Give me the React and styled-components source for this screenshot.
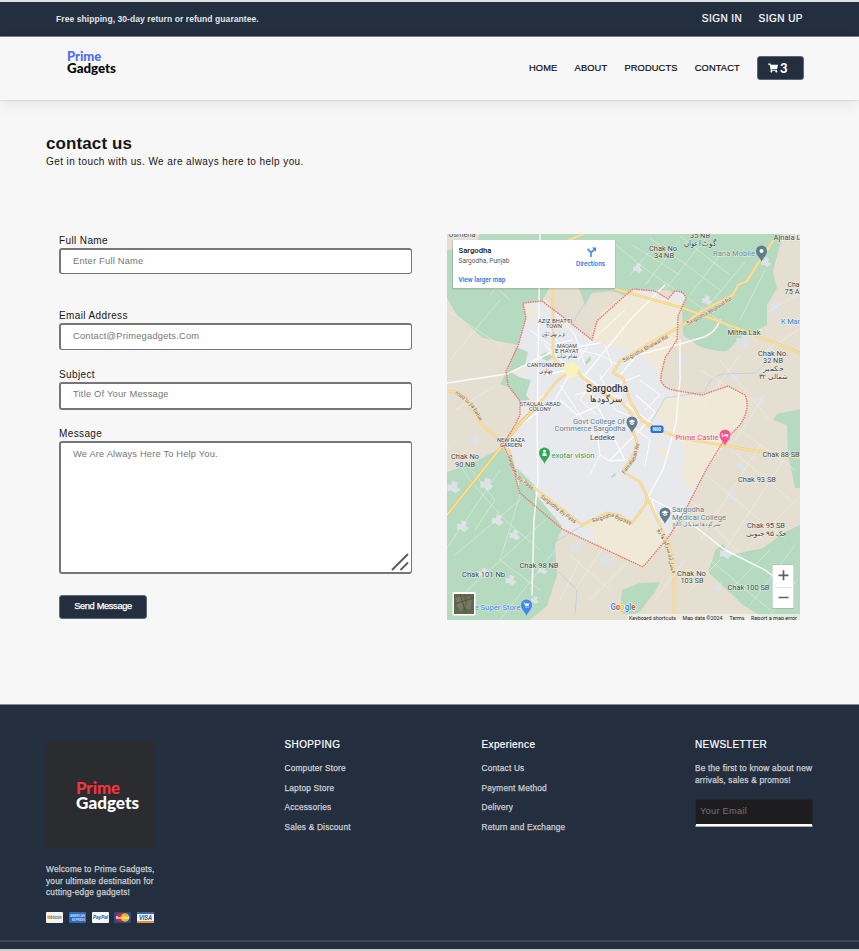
import React from "react";
import styled, { createGlobalStyle, css } from "styled-components";
import { FaShoppingCart } from "react-icons/fa";

const NAVY = "#232f3f";

const GlobalStyle = createGlobalStyle`
  *, *::before, *::after { box-sizing: border-box; }
  body {
    margin: 0;
    background: #f7f7f7;
    color: #161616;
    font-family: "Liberation Sans", Arial, sans-serif;
    letter-spacing: 0.38px;
  }
  h1, h2, p, ul { margin: 0; padding: 0; }
  a { color: inherit; text-decoration: none; }
`;

const Page = styled.div`
  width: 100%;
  height: 951px;
  display: flex;
  flex-direction: column;
  overflow: hidden;
  border-top: 2px solid #dfe2e3;
  border-bottom: 2px solid #c9cbcb;
`;

/* ---------- header ---------- */

const TopBar = styled.div`
  height: 35px;
  flex: none;
  display: flex;
  align-items: center;
  justify-content: space-between;
  padding: 0 56px;
  background: ${NAVY};
  border-bottom: 1px solid #75808d;
  color: #f5f5f5;
`;

const Promo = styled.p`
  font-size: 8.5px;
  font-weight: bold;
  line-height: 10px;
  letter-spacing: 0.07px;
  color: #e2e5e8;
`;

const AuthLinks = styled.nav`
  display: flex;
  gap: 16.3px;
  font-size: 10px;
  line-height: 12px;
  letter-spacing: 0.47px;
  margin-top: -1px;
  color: #fff;
  -webkit-text-stroke: 0.2px #fff;
`;

const Header = styled.header`
  height: 63px;
  flex: none;
  display: flex;
  justify-content: space-between;
  padding: 0 55px 0 67px;
  background: #f7f7f7;
  box-shadow: 0 1px 1px rgba(0, 0, 0, 0.07), 0 4px 14px rgba(0, 0, 0, 0.07);
`;

const LogoSlot = styled.a`
  padding-top: 14px;
`;

const Wordmark = styled.svg`
  display: block;
  flex: none;
  overflow: visible;
  font-family: Lato, sans-serif;
  font-weight: 900;
  letter-spacing: 0;
`;

const Menu = styled.nav`
  display: flex;
  align-items: center;
  height: 62px;
  font-size: 9.3px;
  line-height: 11px;
  letter-spacing: 0.12px;
  color: #0c0c0c;
  -webkit-text-stroke: 0.2px #0c0c0c;
`;

const MenuLink = styled.a`
  margin-right: 17.2px;
`;

const CartButton = styled.a`
  width: 47px;
  height: 24px;
  display: flex;
  align-items: center;
  padding: 0 0 1px 10px;
  gap: 2px;
  border: 1px solid #5d6875;
  border-radius: 3px;
  background: ${NAVY};
  color: #fff;
  font: 900 13px/14px Lato, "Liberation Sans", sans-serif;
  -webkit-text-stroke: 0;
`;

/* ---------- contact section ---------- */

const Main = styled.main`
  height: 604px;
  flex: none;
  padding: 34px 46px 0;
`;

const Title = styled.h1`
  font-size: 17px;
  line-height: 20px;
  letter-spacing: 0.1px;
`;

const Lead = styled.p`
  font-size: 10px;
  line-height: 12px;
  letter-spacing: 0.41px;
  margin-top: 2px;
`;

const Columns = styled.div`
  display: grid;
  grid-template-columns: 353px 353px;
  column-gap: 35px;
  margin: 66px 0 0 13px;
`;

const Form = styled.form`
  display: flex;
  flex-direction: column;
  padding-top: 1px;
`;

const Field = styled.label`
  display: flex;
  flex-direction: column;
  margin-bottom: ${(p) => p.$after}px;
  font-size: 10px;
  line-height: 12px;
`;

const control = css`
  width: 100%;
  margin: 1px 0 0;
  padding: 0 12px;
  border: solid #767676;
  border-width: 2px 1px 1px 2px;
  border-radius: 3px;
  background: #fff;
  outline: none;
  font: 9.3px/11px "Liberation Sans", Arial, sans-serif;
  letter-spacing: 0.22px;
  &::placeholder { color: #757575; opacity: 1; }
`;

const TextInput = styled.input`
  ${control}
  height: ${(p) => p.$height}px;
  padding-bottom: ${(p) => p.$lift || 2}px;
  border-bottom-width: ${(p) => p.$bottom || 1}px;
`;

const AreaWrap = styled.div`
  position: relative;
  display: flex;
`;

const TextArea = styled.textarea`
  ${control}
  height: 133px;
  padding-top: 6px;
  border-bottom-width: 2px;
  letter-spacing: 0.18px;
  resize: none;
`;

const Grip = styled.svg`
  position: absolute;
  right: 3px;
  bottom: 3px;
`;

const SendButton = styled.button`
  width: 88px;
  height: 24px;
  padding: 0 0 1px;
  border: 1px solid #5d6875;
  border-radius: 3px;
  background: ${NAVY};
  color: #fff;
  font: 9.3px/11px "Liberation Sans", Arial, sans-serif;
  letter-spacing: -0.36px;
  -webkit-text-stroke: 0.25px #fff;
`;

const MapView = styled.svg`
  display: block;
  width: 353px;
  height: 386px;
  font-family: Roboto, "Noto Sans", sans-serif;
  letter-spacing: 0;
`;

/* ---------- footer ---------- */

const Footer = styled.footer`
  flex: 1;
  display: flex;
  flex-direction: column;
  justify-content: space-between;
  background: ${NAVY};
  border-top: 1px solid #858e98;
  color: #ccced1;
`;

const FooterGrid = styled.div`
  display: grid;
  grid-template-columns: 238.5px 197px 213.5px 118px;
  padding: 34px 46px 0;
`;

const BrandTile = styled.div`
  width: 108.5px;
  height: 108px;
  margin-top: 1px;
  padding: 41px 0 0 30px;
  background: #2b2c30;
`;

const Small = styled.p`
  font-size: 8.3px;
  line-height: 11.5px;
  letter-spacing: 0.2px;
  white-space: nowrap;
  -webkit-text-stroke: 0.25px currentColor;
`;

const Blurb = styled(Small)`
  margin-top: 16px;
`;

const FooterHeading = styled.h2`
  font-size: 10px;
  font-weight: normal;
  line-height: 12px;
  margin-bottom: 12px;
  color: #fff;
  -webkit-text-stroke: 0.2px #fff;
`;

const LinkList = styled.ul`
  list-style: none;
  font-size: 8.3px;
  line-height: 19.6px;
  letter-spacing: 0.19px;
  margin-top: -4px;
  -webkit-text-stroke: 0.25px currentColor;
`;

const Payments = styled.div`
  display: flex;
  gap: 5.8px;
  margin-top: 13px;
`;

const Card = styled.svg`
  display: block;
  width: 17px;
  height: 11px;
  font-family: "Liberation Sans", sans-serif;
  font-weight: bold;
  letter-spacing: 0;
`;

const EmailInput = styled.input`
  display: block;
  width: 118px;
  height: 28px;
  margin-top: 13px;
  padding: 0 4px 3px;
  border: 1px solid #27272b;
  border-bottom: 3px ridge #fff;
  border-radius: 1px;
  background: #1d1d20;
  outline: none;
  font: 9.3px/11px "Liberation Sans", Arial, sans-serif;
  letter-spacing: 0.25px;
  &::placeholder { color: #757575; opacity: 1; }
`;

const FooterRule = styled.div`
  height: 9px;
  border-top: 2px solid #3f4751;
`;

/* ---------- map data (page-scaled map units) ---------- */

const greens = [
  "M447 250L475 246L480 234L783 234L773 271L777 288L767 305L767 325L737 341L727 351Q711 352 697 345L683 335L682 305L670 290L630 291L592 325L567 255L542 301L523 303L526 318L518 345L483 338L457 315L447 298Z",
  "M447 472L473 463L503 447L512 465L520 493L562 529L555 545L557 575L547 606L530 620L447 620Z",
  "M708 572L713 558L715 550L723 544L730 555L763 548L785 532L800 525L800 620L767 620L743 605Z",
  "M787 425L773 420L777 414L800 409L800 488L795 488L788 455Z",
  "M620 612L622 590L640 583L660 582L655 592L647 602L640 612L630 616Z",
  "M516 347L528 352L525 365L510 372L522 378L531 380L526 395L530 400L520 401L508 387L500 384L507 371Z",
  "M541 355L546 352L553 357L548 361L541 358Z",
  "M585 362L590 356L591 360L586 365Z",
  "M611 477L615 473L616 475L612 478Z",
  "M517 468L534 485L536 495L562 526L560 530L520 493Z",
];

const creams = [
  "M600 313L630 291L683 303L678 316L677 340L665 358L661 375L650 362L630 350L600 343Z",
  "M680 391L702 395L728 386L745 395L748 410L737 428L707 468L690 490L681 478L686 455L680 440L660 422L655 410L668 395Z",
  "M632 524L645 508L652 520L662 545L652 557L643 567L600 547L592 530L582 527L607 517Z",
  "M515 360L523 357L524 370L518 375L511 371Z",
  "M525 306L533 305L540 312L532 322L526 316Z",
  "M657 448L664 448L672 458L662 458Z",
];

const lots = [
  [454, 487, 13], [487, 484, 13], [498, 520, 12], [463, 526, 12], [515, 535, 11], [511, 580, 11], [475, 440, 10],
  [577, 547, 13], [606, 560, 13], [638, 268, 10], [707, 300, 10], [766, 262, 10], [682, 358, 10], [735, 375, 9],
  [744, 341, 15], [741, 466, 10], [732, 497, 10], [726, 553, 12], [760, 400, 10], [552, 257, 8], [485, 278, 9], [770, 355, 9], [718, 587, 10],
  [776, 307, 12], [484, 573, 11], [535, 600, 8], [543, 570, 9],
];

const whiteRoads = [
  "M540 234L537 430L538 480L534 520L532 595",
  "M447 383L507 374L556 350L600 343",
  "M573 368L620 400L653 424",
  "M585 375L630 320L665 285",
  "M583 378L625 460L610 461L600 455L598 440L608 420",
  "M620 375L637 355L680 344L704 337Q716 332 720 320",
  "M680 340L680 380L676 423L663 470L648 497",
  "M648 497L678 513L725 550L765 570L785 585",
  "M573 368L555 400L520 425",
  "M610 460L640 430L655 412L636 395",
  "M547 375L570 369L545 345",
  "M560 400L577 415L600 405",
];

const cityLanes = [
  "M557 345L600 355L618 365", "M560 385L590 430L600 440", "M578 360L592 340L625 310", "M590 385L580 400L597 415",
  "M545 300L575 335L585 365", "M530 330L550 345L572 340", "M575 395L615 385L640 375", "M600 375L615 410L640 420",
  "M590 400L620 395L628 412", "M640 380L660 395L645 410", "M630 425L650 440L645 465", "M565 372L548 392L530 405",
  "M600 455L590 475", "M652 500L660 530", "M550 330L560 345", "M605 345L612 365L600 380",
];

const lanes = [
  "M447 445L470 480L505 520L540 550",
  "M447 548L500 470", "M455 555L520 500", "M462 595L545 520", "M500 620L555 550", "M470 468L495 500L475 530", "M520 495L500 560L540 590",
  "M610 240L640 265L690 300L740 335", "M632 245L680 275", "M650 238L720 290", "M680 236L730 275", "M630 275L655 245", "M645 285L680 240",
  "M665 290L700 245", "M690 295L720 255", "M705 310L745 262", "M740 320L765 270",
  "M460 255L510 300", "M490 295L520 260", "M447 310L500 345", "M450 360L500 300", "M455 410L497 385",
  "M700 470L760 520", "M690 500L745 560", "M720 440L790 500", "M740 430L795 470", "M700 540L760 445", "M725 550L790 450", "M745 550L797 500",
  "M710 560L770 610", "M730 590L770 550", "M750 605L795 545", "M770 615L797 580",
  "M570 555L610 590", "M575 590L605 545", "M590 600L630 560", "M560 600L580 560", "M685 560L655 600", "M690 590L720 560",
  "M700 370L750 400", "M720 360L770 420", "M740 355L700 410", "M765 395L735 440", "M752 360L798 330", "M770 310L798 295",
];

const yellowRoads = [
  "M553 288L553 355L557 366L573 365L583 378",
  "M517 425L538 405L557 381L573 368",
  "M567 241L583 234",
  "M615 289L683 308L750 333L800 353",
  "M583 378L605 395L622 402L632 415",
  "M620 361L647 345L683 325L700 312L733 295L738 285L747 281L757 265L773 241",
  "M447 391L455 392L465 397L482 425L500 440L510 452L515 475L540 492L582 525L607 513L618 515L632 523L645 505L647 497",
  "M647 425L680 438L727 446L800 458",
  "M630 355L620 361L613 373L623 378L630 401L642 421L652 425",
  "M647 497L640 482L623 472L635 452L638 445L632 428",
  "M647 497L670 548L674 572L674 620",
];

const boundary =
  "M523 303L542 301L567 320L592 340L597 321L620 300L633 289L655 291L668 299L675 291Q684 291 686 298L678 316L677 340L665 358L661 375L661 381Q664 388 673 390L702 395L728 386L745 395Q751 408 740 425L723 442L707 468L688 505L670 535L643 567L562 529L520 493L510 458L503 445L515 425L520 415L520 401L508 385L506 371L518 346L526 318Z";

const roadNames = [
  ["Sargodha Bhalwal Rd", "M623 361L649 347L674 333", 5.4],
  ["Sargodha Bhalwal Rd", "M687 324L712 311L735 296", 5.4],
  ["road to jia bahar", "M456 392L472 405L484 426", 5.4],
  ["Sargodha By Pass", "M509 455L516 476L537 492", 5.4],
  ["Sargodha By Pass", "M541 496L560 511L579 525", 5.4],
  ["Sargodha Bypass", "M592 521L612 515L632 524", 5.4],
  ["Faisalabad Rd", "M623 473L634 459L639 440", 5.4],
  ["فیصل آباد سرگودھا روڈ", "M659 528L668 548L674 574", 5.4],
];

const labels = [
  { t: "Sargodha", x: 607, y: 392, s: 10, w: 42, b: 500, c: "#333" },
  { t: "سرگودها", x: 606, y: 402, s: 9, w: 33, b: 500, c: "#333" },
  { t: "AZIZ BHATTI", x: 555, y: 323, s: 5.2, w: 34 },
  { t: "TOWN", x: 554, y: 328, s: 5.2, w: 16 },
  { t: "عزیز بھٹی ٹاؤن", x: 554, y: 336, s: 5.5, w: 24 },
  { t: "MAQAM", x: 567, y: 348, s: 5.2, w: 20 },
  { t: "E HAYAT", x: 567, y: 353, s: 5.2, w: 24 },
  { t: "مقام حیات", x: 567, y: 358, s: 5.5, w: 20 },
  { t: "CANTONMENT", x: 546, y: 367, s: 5.4, w: 38 },
  { t: "چھاونی", x: 546, y: 373, s: 5.5, w: 15 },
  { t: "STAQLAL-ABAD", x: 540, y: 406, s: 5.4, w: 41 },
  { t: "COLONY", x: 540, y: 411, s: 5.2, w: 22 },
  { t: "NEW RAZA", x: 511, y: 442, s: 5.2, w: 28 },
  { t: "GARDEN", x: 511, y: 446.5, s: 5.2, w: 22 },
  { t: "Chak No", x: 465, y: 459, w: 28 },
  { t: "90 NB", x: 465, y: 466.5, w: 20 },
  { t: "Chak 98 NB", x: 539, y: 568, w: 39 },
  { t: "Chak 101 Nb", x: 483.5, y: 577, w: 43 },
  { t: "Chak No.", x: 664, y: 250.5, w: 30 },
  { t: "34 NB", x: 664, y: 258, w: 20 },
  { t: "35 NB", x: 700, y: 238, w: 20 },
  { t: "گوٹ اعوان", x: 700, y: 246, w: 32 },
  { t: "Ajnala L", x: 787, y: 240, w: 27 },
  { t: "Usmeria", x: 462, y: 237, w: 27 },
  { t: "Cha", x: 793.5, y: 286.5, w: 12 },
  { t: "75 A", x: 792, y: 294, w: 15 },
  { t: "Mitha Lak", x: 744, y: 335, w: 33 },
  { t: "Chak No.", x: 773, y: 355.5, w: 30 },
  { t: "32 NB", x: 773, y: 363, w: 20 },
  { t: "حکمیر", x: 773, y: 371, s: 6.5, w: 20 },
  { t: "۳۲ شمالی", x: 773, y: 379, s: 6.5, w: 29 },
  { t: "Chak 88 SB", x: 781, y: 456.5, w: 37 },
  { t: "Chak 93 SB", x: 757, y: 482, w: 38 },
  { t: "Chak 95 SB", x: 766, y: 528, w: 38 },
  { t: "جک ۹۵ جنوبی", x: 766, y: 536, s: 6.5, w: 41 },
  { t: "Chak No", x: 691.5, y: 575.5, w: 29 },
  { t: "103 SB", x: 692, y: 583, w: 23 },
  { t: "Chak 100 SB", x: 748.5, y: 589.5, w: 42 },
  { t: "Ledeke", x: 602.5, y: 439.5, w: 25 },
  { t: "Govt College Of", x: 599, y: 423.5, w: 52, c: "#5f7a85" },
  { t: "Commerce Sargodha", x: 590, y: 431, w: 71, c: "#5f7a85" },
  { t: "Sargodha", x: 688, y: 512, w: 32, c: "#5f7a85" },
  { t: "Medical College", x: 699, y: 519.5, w: 54, c: "#5f7a85" },
  { t: "سرگودھا میڈیکل کالج", x: 696, y: 526, s: 6, w: 48, c: "#5f7a85" },
  { t: "Rana Mobile", x: 734, y: 256, w: 42, c: "#6b8a90" },
  { t: "K Mar", x: 790.5, y: 323.5, w: 19, c: "#2f7de1" },
  { t: "Prime Castle", x: 697, y: 440, w: 43, c: "#e6457f" },
  { t: "exotar vision", x: 573, y: 457.5, w: 43, c: "#2f9a55" },
  { t: "e Super Store", x: 497.5, y: 610, w: 46, c: "#3f85ea" },
];

function Pin({ x, y, color, children }) {
  return (
    <g transform={`translate(${x} ${y})`}>
      <path d="M0 11C-1 7-5.5 4.500-5.500 0A5.500 5.500 0 0 1 5.500 0C5.500 4.500 1 7 0 11Z" fill={color} />
      <g fill="#fff">{children}</g>
    </g>
  );
}

const gradCap = <path d="M-3.500-.8L0-2.600L3.500-.8L0 1ZM-2.200.6L0 1.700L2.200.6V2L0 3L-2.200 2Z" />;
const trolley = <path d="M-3-2.500H-1.800L-1.500-1.500H3L2 1H-1.200L-2.300-1.700H-3ZM-1.200 1.700H0V2.700H-1.200ZM1 1.700H2.200V2.700H1Z" />;

function CityMap() {
  return (
    <MapView viewBox="447 234 353 386">
      <rect x="447" y="234" width="353" height="386" fill="#e5dfd1" />
      {greens.slice(0, 5).map((d) => <path key={d} d={d} fill="#b6dabf" />)}
      <path d="M553 309L572 315L585 305L592 293L612 291L625 296L605 312L592 341Z" fill="#e5dfd1" />
      <path d={boundary} fill="#e7e9ed" />
      {creams.map((d) => <path key={d} d={d} fill="#f1e9d8" />)}
      <path d="M592 340L597 321L625 295L640 295L625 320L612 342Z" fill="#f1e9d8" />
      {greens.slice(5).map((d) => <path key={d} d={d} fill="#b6dabf" />)}
      {lots.map(([x, y, r]) => (
        <path key={`${x}-${y}`} transform={`translate(${x} ${y})`} fill="#dde2e6"
          d={`M${-r / 2} ${-r / 5}L${-r / 6} ${-r / 6}L${-r / 8} ${-r / 2}L${r / 3} ${-r / 3}L${r / 5} 0L${r / 2} ${r / 6}L${r / 8} ${r / 2}L${-r / 4} ${r / 4}L${-r / 2} ${r / 3}Z`} />
      ))}
      <g fill="none" strokeLinejoin="round" strokeLinecap="round">
        <g stroke="#f4f5f3" strokeWidth=".6" opacity=".75">{lanes.map((d) => <path key={d} d={d} />)}</g>
        <g stroke="#fff" strokeWidth=".9">{cityLanes.map((d) => <path key={d} d={d} />)}</g>
        <g stroke="#b9cfe0" strokeWidth=".8">
          <path d="M620 280L640 260L655 234" /><path d="M571 325L588 298L610 265" />
          <path d="M650 425L665 398L705 392Q708 378 722 374L755 373L770 360" />
          <path d="M582 526L553 543L552 565L577 590L575 615" />
        </g>
        <g stroke="#fbfbfb" strokeWidth="1.400">{whiteRoads.map((d) => <path key={d} d={d} />)}</g>
        <g stroke="#efcf87" strokeWidth="2.600">{yellowRoads.map((d) => <path key={d} d={d} />)}</g>
        <g stroke="#fbdf9b" strokeWidth="1.600">{yellowRoads.map((d) => <path key={d} d={d} />)}</g>
        <path d="M447 515L519 425L538 405" stroke="#e8c574" strokeWidth="3" />
        <path d="M447 515L519 425L538 405" stroke="#fbe3a2" strokeWidth="1.500" />
        <path d={boundary} stroke="#ee7468" strokeWidth="1.400" strokeDasharray="1.5 .9" strokeLinecap="butt" />
      </g>
      <path d="M562 366L573 361L579 367L577 376L568 378Z" fill="#f8f3bd" />
      {roadNames.map(([name, d, size], i) => (
        <g key={d}>
          <path id={`road${i}`} d={d} fill="none" />
          <text fontSize={size} fill="#80593c" stroke="#f6eede" strokeWidth=".6" paintOrder="stroke" dy="1.500">
            <textPath href={`#road${i}`}>{name}</textPath>
          </text>
        </g>
      ))}
      {labels.map((l) => (
        <text key={`${l.t}${l.x}`} x={l.x} y={l.y} fontSize={l.s || 7.5} fontWeight={l.b || 400} fill={l.c || "#434548"}
          textAnchor="middle" textLength={l.w} lengthAdjust="spacingAndGlyphs" stroke="#fff" strokeWidth="1" strokeOpacity=".6" paintOrder="stroke">
          {l.t}
        </text>
      ))}
      <Pin x={761.5} y={251} color="#607d8b"><circle r="2" /></Pin>
      <Pin x={632} y={422} color="#607d8b">{gradCap}</Pin>
      <Pin x={665} y={513} color="#607d8b">{gradCap}</Pin>
      <Pin x={544.5} y={453} color="#34a853"><circle cy="-1.800" r="1.400" /><path d="M-2 3V1.500Q-2-.2 0-.2Q2-.2 2 1.500V3Z" /></Pin>
      <Pin x={725} y={435} color="#f0588f"><path d="M-3.200-2V2.200H-2.500V1.200H2.500V2.200H3.200V-.8H-.3V.4H-2.500V-2Z" /></Pin>
      <Pin x={526.500} y={605} color="#4285f4">{trolley}</Pin>
      <rect x="650.500" y="425.500" width="13" height="7.500" rx="2" fill="#2f6fd0" />
      <text x="657" y="431" fontSize="4.500" fontWeight="700" fill="#fff" textAnchor="middle">N60</text>

      <text x="610.500" y="610" fontSize="9" fontWeight="700" textLength="25" lengthAdjust="spacingAndGlyphs" stroke="#fff" strokeWidth="1" paintOrder="stroke"><tspan fill="#4285f4">G</tspan><tspan fill="#ea4335">o</tspan><tspan fill="#fbbc05">o</tspan><tspan fill="#4285f4">g</tspan><tspan fill="#34a853">l</tspan><tspan fill="#ea4335">e</tspan></text>
      <rect x="627" y="614" width="173" height="6" fill="#f4f3ef" opacity=".7" />
      <g fontSize="5.500" fill="#222">
        <text x="629" y="619.500" textLength="47" lengthAdjust="spacingAndGlyphs">Keyboard shortcuts</text>
        <text x="682.500" y="619.500" textLength="40" lengthAdjust="spacingAndGlyphs">Map data ©2024</text>
        <text x="729.500" y="619.500" textLength="15" lengthAdjust="spacingAndGlyphs">Terms</text>
        <text x="751" y="619.500" textLength="46" lengthAdjust="spacingAndGlyphs">Report a map error</text>
      </g>

      <rect x="452" y="240" width="163.500" height="49.500" rx="1" fill="#000" opacity=".13" />
      <rect x="453" y="240" width="162" height="48" rx="1" fill="#fff" />
      <text x="458.500" y="253" fontSize="8" fontWeight="500" fill="#111" textLength="33" lengthAdjust="spacingAndGlyphs">Sargodha</text>
      <text x="458.500" y="263" fontSize="6.300" fill="#5a5a5a" textLength="51" lengthAdjust="spacingAndGlyphs">Sargodha, Punjab</text>
      <text x="458.500" y="282" fontSize="6.300" fontWeight="500" fill="#1a73e8" textLength="47" lengthAdjust="spacingAndGlyphs">View larger map</text>
      <text x="576" y="266" fontSize="6.300" fontWeight="500" fill="#1a73e8" textLength="29" lengthAdjust="spacingAndGlyphs">Directions</text>
      <path d="M591 257V252.500L594.500 249.500M591 252.500L587.500 249" fill="none" stroke="#5594ee" strokeWidth="1.800" />
      <path d="M592 247.500H596V251.800Z" fill="#3f83e8" />

      <rect x="452.500" y="592" width="23" height="23.500" rx="1" fill="#fff" />
      <rect x="454" y="594" width="20" height="20" fill="#65664f" />
      <path d="M456 598L462 596L466 603L461 612L457 606ZM468 596L472 600L470 610L466 608Z" fill="#7b7961" />
      <path d="M454 604L474 598M460 594L466 614" stroke="#4f5341" fill="none" />

      <rect x="772" y="564.500" width="22" height="44.500" rx="1" fill="#000" opacity=".12" />
      <rect x="772.500" y="565" width="21" height="43" rx="1" fill="#fff" />
      <path d="M775 587.500H791" stroke="#e3e3e3" />
      <path d="M778.500 575.300H788.500M783.500 570.300V580.300M778.500 597.500H788.500" stroke="#606060" strokeWidth="1.700" fill="none" />
    </MapView>
  );
}

function Logo({ width, height, top, bottom, size, gap }) {
  return (
    <Wordmark width={width} height={height} fontSize={size}>
      <text x="0" y={size * 0.79} fill={top} textLength={width * 0.7} lengthAdjust="spacingAndGlyphs">Prime</text>
      <text x="0" y={size * 0.79 + gap} fill={bottom} textLength={width} lengthAdjust="spacingAndGlyphs">Gadgets</text>
    </Wordmark>
  );
}

function PaymentCards() {
  return (
    <Payments>
      <Card viewBox="0 0 17 11">
        <rect width="17" height="11" rx="1" fill="#f4f4f2" />
        <circle cx="3" cy="5.300" r="1.800" fill="#f19a33" />
        <text x="4.600" y="6.900" fontSize="4.500" fill="#555" textLength="11" lengthAdjust="spacingAndGlyphs">bitcoin</text>
      </Card>
      <Card viewBox="0 0 17 11">
        <rect width="17" height="11" rx="1" fill="#2f68c0" />
        <text x="1" y="5.200" fontSize="4" fill="#cfe0f8" textLength="15" lengthAdjust="spacingAndGlyphs">AMERICAN</text>
        <text x="3" y="9" fontSize="4" fill="#cfe0f8" textLength="13" lengthAdjust="spacingAndGlyphs">EXPRESS</text>
      </Card>
      <Card viewBox="0 0 17 11">
        <rect width="17" height="11" rx="1" fill="#f6f7f9" />
        <text x="1" y="7" fontSize="5" fontStyle="italic" fill="#24549e" textLength="15" lengthAdjust="spacingAndGlyphs">PayPal</text>
      </Card>
      <Card viewBox="0 0 17 11">
        <rect width="17" height="11" rx="1" fill="#2a4a85" />
        <circle cx="6" cy="5.500" r="4.300" fill="#cf2a27" />
        <circle cx="11" cy="5.500" r="4.300" fill="#efb424" />
        <text x="2" y="6.700" fontSize="3.500" fill="#fff" textLength="13" lengthAdjust="spacingAndGlyphs">MasterCard</text>
      </Card>
      <Card viewBox="0 0 17 11">
        <rect width="17" height="11" rx="1" fill="#f3f4f6" />
        <path d="M0 1Q0 0 1 0H16Q17 0 17 1V2H0Z" fill="#3664a8" />
        <path d="M0 9H17V10Q17 11 16 11H1Q0 11 0 10Z" fill="#e09332" />
        <text x="2" y="8" fontSize="6.500" fontStyle="italic" fill="#264f94" textLength="13" lengthAdjust="spacingAndGlyphs">VISA</text>
      </Card>
    </Payments>
  );
}

function FooterLinks({ title, items }) {
  return (
    <div>
      <FooterHeading>{title}</FooterHeading>
      <LinkList>{items.map((item) => <li key={item}><a href="#">{item}</a></li>)}</LinkList>
    </div>
  );
}

export default function App() {
  return (
    <Page>
      <GlobalStyle />
      <TopBar>
        <Promo>Free shipping, 30-day return or refund guarantee.</Promo>
        <AuthLinks><a href="#">SIGN IN</a><a href="#">SIGN UP</a></AuthLinks>
      </TopBar>
      <Header>
        <LogoSlot href="#"><Logo width={49} height={26} size={13} gap={12} top="#4f6df5" bottom="#050505" /></LogoSlot>
        <Menu>
          {["HOME", "ABOUT", "PRODUCTS", "CONTACT"].map((m) => <MenuLink key={m} href="#">{m}</MenuLink>)}
          <CartButton href="#"><FaShoppingCart size={10} />3</CartButton>
        </Menu>
      </Header>
      <Main>
        <Title>contact us</Title>
        <Lead>Get in touch with us. We are always here to help you.</Lead>
        <Columns>
          <Form>
            <Field $after={36}>Full Name<TextInput $height={26} placeholder="Enter Full Name" /></Field>
            <Field $after={19}>Email Address<TextInput $height={27} placeholder="Contact@Primegadgets.Com" /></Field>
            <Field $after={18}>Subject<TextInput $height={28} $bottom={2} $lift={4} placeholder="Title Of Your Message" /></Field>
            <Field $after={21}>
              Message
              <AreaWrap>
                <TextArea placeholder="We Are Always Here To Help You." />
                <Grip width="18" height="18" viewBox="0 0 18 18" stroke="#5e5e5e" strokeWidth="2" fill="none">
                  <path d="M1 17L17 1M9.500 17L17 9.500" />
                </Grip>
              </AreaWrap>
            </Field>
            <SendButton type="button">Send Message</SendButton>
          </Form>
          <CityMap />
        </Columns>
      </Main>
      <Footer>
        <FooterGrid>
          <div>
            <BrandTile><Logo width={63} height={31} size={16.5} gap={15} top="#f5333b" bottom="#fff" /></BrandTile>
            <Blurb>Welcome to Prime Gadgets,<br />your ultimate destination for<br />cutting-edge gadgets!</Blurb>
            <PaymentCards />
          </div>
          <FooterLinks title="SHOPPING" items={["Computer Store", "Laptop Store", "Accessories", "Sales & Discount"]} />
          <FooterLinks title="Experience" items={["Contact Us", "Payment Method", "Delivery", "Return and Exchange"]} />
          <div>
            <FooterHeading>NEWSLETTER</FooterHeading>
            <Small>Be the first to know about new<br />arrivals, sales &amp; promos!</Small>
            <EmailInput placeholder="Your Email" />
          </div>
        </FooterGrid>
        <FooterRule />
      </Footer>
    </Page>
  );
}
